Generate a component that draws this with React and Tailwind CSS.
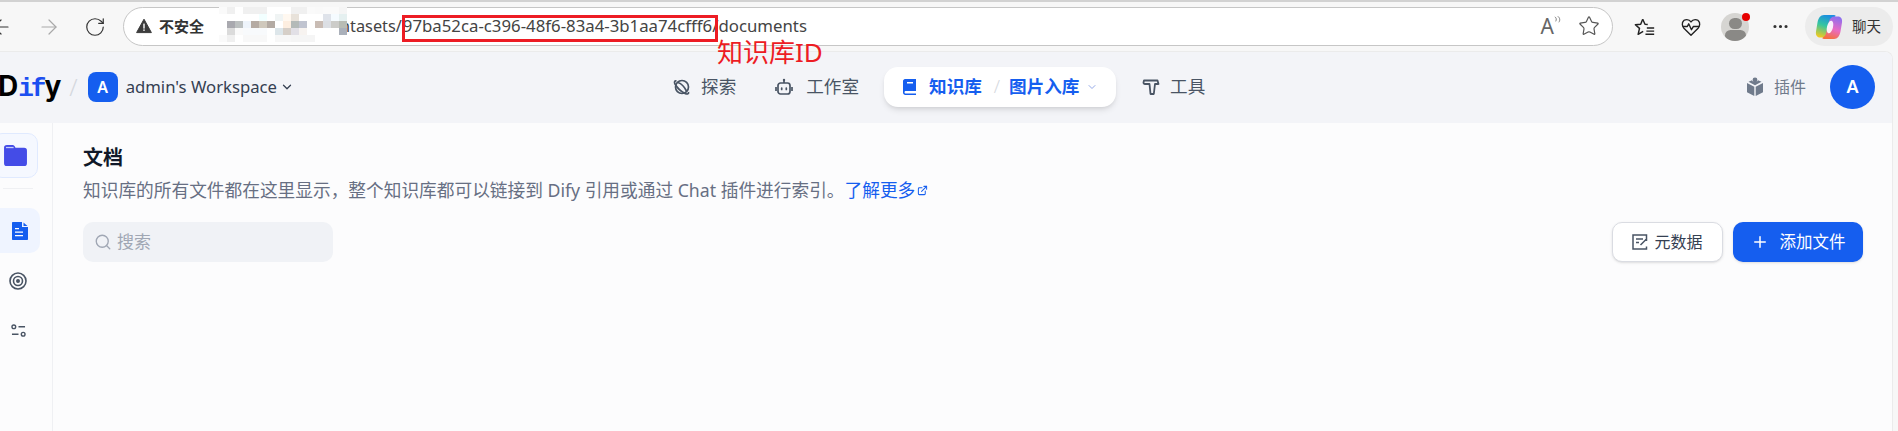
import { ArrowLeft, ArrowRight, RotateCw, Star, Ellipsis, ChevronDown, Plus, Search, ExternalLink } from "lucide-react";

const cjk = "font-['Noto_Sans','Noto_Sans_CJK_SC',sans-serif]";

// the blurred part of the address, 16 x 5 cells
const mosaic = [
  "bg-[#fafafa]", "bg-[#f0f0f0]", "bg-white", "bg-[#f0f0f0]", "bg-[#f0f0f0]", "bg-[#f0f0f0]", "bg-white", "bg-white", "bg-white", "bg-[#f0f0f0]", "bg-[#f0f0f0]", "bg-[#fafafa]", "bg-[#f9f9f9]", "bg-[#fafafa]", "bg-[#fafafa]", "bg-[#f5f5f5]",
  "bg-white", "bg-white", "bg-white", "bg-white", "bg-white", "bg-[#f2ffff]", "bg-white", "bg-[#f0f4f4]", "bg-[#fff8f0]", "bg-[#e8e2da]", "bg-white", "bg-white", "bg-white", "bg-[#dfe3ea]", "bg-[#f5fbff]", "bg-[#e5f0f0]",
  "bg-white", "bg-[#a9a9af]", "bg-[#bcc0c0]", "bg-[#eef4fb]", "bg-[#b5aba3]", "bg-[#cfc8bc]", "bg-[#b3aaa3]", "bg-white", "bg-[#fdeee0]", "bg-[#b4bab8]", "bg-[#c0c4d0]", "bg-white", "bg-[#c9bcb4]", "bg-[#dcdfe4]", "bg-[#ccccc9]", "bg-[#b8bcb4]",
  "bg-white", "bg-[#dbdbdb]", "bg-[#fafafa]", "bg-[#f8fafc]", "bg-[#f8fafc]", "bg-[#f8fafc]", "bg-white", "bg-[#dde6ea]", "bg-[#d6cfc8]", "bg-[#e2e0e6]", "bg-[#f7f3f0]", "bg-white", "bg-white", "bg-white", "bg-white", "bg-[#aab0ba]",
  "bg-[#fafafa]", "bg-[#f0f0f0]", "bg-white", "bg-[#f8f8f8]", "bg-[#f8f8f8]", "bg-[#f8f8f8]", "bg-white", "bg-[#f7f7f7]", "bg-[#f7f7f7]", "bg-[#f5f5f5]", "bg-[#f5f5f5]", "bg-[#f5f5f5]", "bg-white", "bg-white", "bg-white", "bg-white",
];

const BrowserBar = () => (
  <div className="h-[51px] shrink-0 flex items-center bg-[#f7f7f7] border-t-2 border-t-[#d2d2d2] text-[#333]">
    <ArrowLeft className="w-6 h-6 -ml-[11px] shrink-0" strokeWidth={1.2} />
    <ArrowRight className="w-6 h-6 ml-[24px] shrink-0 text-[#a9a9a9]" strokeWidth={1.2} />
    <RotateCw className="w-[22px] h-[22px] ml-[23px] shrink-0" strokeWidth={1.3} />
    <div className={`relative ml-[17px] w-[1490px] h-[39px] -mt-[1px] bg-white border border-[#c6c6c6] rounded-full flex items-center ${cjk}`}>
      <svg viewBox="0 0 16 16" className="w-[16px] h-[16px] ml-[12px] shrink-0">
        <path d="M8 1.2 15.4 14.6H.6Z" fill="#3c3c3c" stroke="#3c3c3c" strokeLinejoin="round" />
        <rect x="7.3" y="5.6" width="1.4" height="5" fill="#fff" />
        <rect x="7.3" y="11.4" width="1.4" height="1.5" fill="#fff" />
      </svg>
      <span className="ml-[7px] text-[15px] font-bold text-[#333] whitespace-nowrap">不安全</span>
      <span className="ml-[136px] text-[16.3px] text-[#444] whitespace-nowrap">ntasets/</span>
      <span className="ml-[1px] text-[16.8px] text-[#444] whitespace-nowrap">97ba52ca-c396-48f6-83a4-3b1aa74cfff6</span>
      <span className="text-[16.8px] text-[#444] whitespace-nowrap">/documents</span>
      <div className="absolute left-[95px] -top-[1px] w-[128px] h-[36px] grid grid-cols-16 grid-rows-5">
        {mosaic.map((c, i) => (
          <div key={i} className={c} />
        ))}
      </div>
      <div className="absolute left-[278px] top-[7px] w-[316px] h-[27px] border-[3px] border-[#ed1c24]" />
      <span className="absolute left-[593px] top-[27px] text-[26px] leading-[34px] text-[#ed1c24] whitespace-nowrap z-10">知识库ID</span>
      <span className="ml-auto text-[#666] text-[21px] leading-none mr-[24px] relative">
        A
        <svg viewBox="0 0 10 10" className="absolute top-0 -right-[8px] w-[9px] h-[9px]" fill="none" stroke="#777" strokeWidth="1">
          <path d="M2 1c2 1 2 3 1 5M5 0c3 2 3 5 1.500 7" />
        </svg>
      </span>
      <Star className="w-[22px] h-[22px] mr-[12px] text-[#555] shrink-0" strokeWidth={1.3} />
    </div>
    <svg viewBox="0 0 24 24" className="ml-[21px] w-[22px] h-[22px] shrink-0" fill="none" stroke="#222" strokeWidth="1.6" strokeLinejoin="round">
      <path d="M9.500 3.500 7.300 9 1.500 9.500 6 13.500 4.500 20l5.500-3.300" />
      <path d="M9.500 3.500 12 9l3 .2M14 13h8M13.500 16.500h8.500M12.500 20h9.500" />
    </svg>
    <svg viewBox="0 0 24 24" className="ml-[24px] w-[22px] h-[22px] shrink-0" fill="none" stroke="#222" strokeWidth="1.5" strokeLinejoin="round">
      <path d="M12 21 4 13C1 9.500 2.500 4 7.500 4c2 0 3.500 1 4.500 2.500C13 5 14.500 4 16.500 4c5 0 6.500 5.500 3.500 9Z" />
      <path d="M2.500 11.500H8l1.500-3 3 6.500 2-3.500h7" />
    </svg>
    <div className="ml-[19px] relative w-[28px] h-[28px] rounded-full bg-[#d6d5d2] overflow-hidden shrink-0 flex flex-col items-center">
      <div className="mt-[5px] w-[13px] h-[14px] rounded-full bg-[#8a8986]" />
      <div className="mt-[1px] w-[21px] h-[12px] rounded-full bg-[#8a8986]" />
    </div>
    <div className="w-[8px] h-[8px] -ml-[7px] -mt-[20px] rounded-full bg-[#e60000] z-10 shrink-0" />
    <Ellipsis className="ml-[21px] w-[19px] h-[19px] shrink-0" strokeWidth={2} />
    <div className={`ml-[15px] w-[88px] h-[39px] rounded-full bg-[#ececec] flex items-center shrink-0 ${cjk}`}>
      <svg viewBox="0 0 28 28" className="ml-[10px] w-[28px] h-[28px] shrink-0">
        <defs>
          <linearGradient id="cpA" x1="0.500" y1="0" x2="0.200" y2="1">
            <stop offset="0" stopColor="#1b8fe0" />
            <stop offset="0.450" stopColor="#35c6a0" />
            <stop offset="1" stopColor="#f7c91c" />
          </linearGradient>
          <linearGradient id="cpB" x1="0.700" y1="0" x2="0.400" y2="1">
            <stop offset="0" stopColor="#8b6ff0" />
            <stop offset="0.550" stopColor="#e86bc4" />
            <stop offset="1" stopColor="#f5703f" />
          </linearGradient>
        </defs>
        <path d="M9 2h10c1.500 0 2 .8 1.200 1.500-1.500.8-2.700 2-3.200 4l-3 12c-.8 3-2.500 5-5.500 5H5c-3 0-4.500-2.500-4-6l1.500-9C3.300 5 5.500 2 9 2Z" fill="url(#cpA)" />
        <path d="M19 26H9c-1.500 0-2-.8-1.200-1.500 1.500-.8 2.700-2 3.200-4l3-12c.8-3 2.500-5 5.500-5H23c3 0 4.500 2.500 4 6l-1.500 9C24.700 23 22.500 26 19 26Z" fill="url(#cpB)" />
        <ellipse cx="15" cy="14" rx="3" ry="6.500" transform="rotate(14 15 14)" fill="#fff" opacity="0.900" />
      </svg>
      <span className="ml-[9px] text-[14.5px] text-[#333] whitespace-nowrap">聊天</span>
    </div>
  </div>
);

const Logo = () => (
  <div className="-ml-[2px] flex items-baseline text-[28px] leading-none font-bold text-black font-['Inter',sans-serif]">
    <span>D</span>
    <span className="text-[#1c4ff0] text-[26px] tracking-[-3px] font-['Liberation_Mono',monospace]">if</span>
    <span className="ml-[1px]">y</span>
  </div>
);

const Header = () => (
  <div className={`h-[71px] shrink-0 pb-[2px] bg-[#f3f4f8] flex items-center ${cjk}`}>
    <Logo />
    <span className="ml-[8px] text-[24px] font-light text-[#d5d8de] leading-none">/</span>
    <div className="ml-[10px] w-[30px] h-[30px] rounded-[8px] bg-[#155eef] text-white text-[16px] font-semibold flex items-center justify-center">A</div>
    <span className="ml-[8px] text-[16.7px] text-[#354052] whitespace-nowrap">admin's Workspace</span>
    <ChevronDown className="ml-[3px] w-[14px] h-[14px] text-[#354052]" strokeWidth={2.2} />

    <svg viewBox="0 0 18 18" className="ml-[379px] w-[18px] h-[18px]" fill="none" stroke="#495464" strokeWidth="1.700">
      <circle cx="9" cy="9" r="6.500" />
      <path d="M3.500 3c-2-.5-2.500 1-1.500 3 2 3.500 6 7.500 10 9.500 2 .8 4 .8 3.500-1.500" />
      <path d="M5 4.500c3 1 6.500 4.500 8.500 8.500" />
    </svg>
    <span className="ml-[10px] text-[17.6px] text-[#495464] whitespace-nowrap">探索</span>

    <svg viewBox="0 0 18 18" className="ml-[39px] w-[18px] h-[18px]" fill="none" stroke="#495464" strokeWidth="1.700">
      <rect x="3" y="5" width="12" height="11" rx="2.500" />
      <circle cx="9" cy="2" r="1.200" fill="#495464" stroke="none" />
      <path d="M9 2.500V5M1 9v4M17 9v4" />
      <path d="M6.700 10v1.500M11.300 10v1.500" strokeLinecap="round" />
    </svg>
    <span className="ml-[13px] text-[17.6px] text-[#495464] whitespace-nowrap">工作室</span>

    <div className="ml-[25px] h-[40px] w-[232px] rounded-[14px] bg-white shadow-md flex items-center text-[#155eef] shrink-0">
      <svg viewBox="0 0 18 18" className="ml-[17px] w-[18px] h-[18px]" fill="#155eef">
        <path d="M4 1h11v12H5c-1 0-1.500.5-1.500 1.200S4 15.500 5 15.500h10V17H4.500C3 17 2 16 2 14.500V3c0-1 1-2 2-2Z" />
        <rect x="6" y="4" width="6" height="1.500" fill="#fff" />
      </svg>
      <span className="ml-[10px] text-[17.6px] font-bold whitespace-nowrap">知识库</span>
      <span className="ml-[12px] text-[18px] text-[#d5d8de] font-light">/</span>
      <span className="ml-[9px] text-[17.6px] font-bold whitespace-nowrap">图片入库</span>
      <ChevronDown className="ml-[7px] w-[12px] h-[12px] text-[#94a9e8]" strokeWidth={2} />
    </div>

    <svg viewBox="0 0 18 18" className="ml-[26px] w-[18px] h-[18px]" fill="none" stroke="#495464" strokeWidth="1.800" strokeLinejoin="round">
      <path d="M2 2.500h13.500l1 3.500H13l-1.200 10H8.500L7.500 6H3c-1 0-1.500-.5-1.500-1.500Z" />
    </svg>
    <span className="ml-[10px] text-[17.6px] text-[#495464] whitespace-nowrap">工具</span>

    <svg viewBox="0 0 20 20" className="ml-auto w-[20px] h-[20px]" fill="#6f7a8b">
      <circle cx="10" cy="3" r="2.400" />
      <path d="M2 6l7.300 3.700V19L2 15.200ZM18 6l-7.300 3.700V19l7.300-3.800ZM3.500 4.800 10 8.300l6.500-3.500-3.500-1.600c-.5 2-5.500 2-6 0Z" />
    </svg>
    <span className="ml-[9px] text-[16px] text-[#6f7a8b] whitespace-nowrap">插件</span>
    <div className="ml-[24px] mr-[17px] w-[45px] h-[44px] rounded-full bg-[#155eef] text-white text-[18px] font-semibold flex items-center justify-center">A</div>
  </div>
);

const Sidebar = () => (
  <div className="w-[53px] shrink-0 border-r border-r-[#eff0f3] flex flex-col">
    <div className="mt-[10px] -ml-[8px] w-[46px] h-[45px] rounded-[10px] bg-[#f5f8ff] border border-[#e0eaff] flex items-center justify-end pr-[10px]">
      <svg viewBox="0 0 24 22" className="w-[23px] h-[21px]">
        <path d="M3 0h6c1.500 0 2 1 3 3h9c2 0 3 1 3 3v13c0 2-1 3-3 3H3c-2 0-3-1-3-3V3c0-2 1-3 3-3Z" fill="#444ce7" />
        <rect x="2" y="2" width="8" height="1.300" fill="#c7d0fb" />
      </svg>
    </div>
    <div className="mt-[10px] ml-[3px] w-[30px] h-px bg-[#eff0f3]" />
    <div className="mt-[19px] w-[40px] h-[45px] rounded-r-[10px] rounded-l-none bg-[#eff4ff] flex items-center justify-center">
      <svg viewBox="0 0 16 18" className="w-[16px] h-[18px]">
        <path d="M1 0h9v5h6v12c0 .6-.4 1-1 1H1c-.6 0-1-.4-1-1V1c0-.6.4-1 1-1Z" fill="#155eef" />
        <path d="M11.500.5 15.500 4h-4Z" fill="#155eef" />
        <path d="M3 6h4v1.300H3ZM3 9.500h8v1.300H3ZM3 13h8v1.300H3Z" fill="#fff" />
      </svg>
    </div>
    <svg viewBox="0 0 18 18" className="mt-[19px] ml-[9px] w-[18px] h-[18px]" fill="none" stroke="#495464" strokeWidth="1.600">
      <circle cx="9" cy="9" r="8" />
      <circle cx="9" cy="9" r="4.500" />
      <circle cx="9" cy="9" r="1.200" fill="#495464" />
    </svg>
    <svg viewBox="0 0 16 15" className="mt-[34px] ml-[11px] w-[15px] h-[14px]" fill="none" stroke="#495464" strokeWidth="1.500">
      <circle cx="3" cy="3" r="2" />
      <path d="M8 3h7M1 11h7" />
      <circle cx="13" cy="11" r="2" />
    </svg>
  </div>
);

const Content = () => (
  <div className={`flex-1 min-w-0 pl-[30px] pr-[29px] pt-[23px] ${cjk}`}>
    <div className="text-[20px] leading-[24px] font-bold text-[#101828]">文档</div>
    <div className="mt-[8px] text-[17.7px] leading-[24px] text-[#676f83] flex items-center whitespace-nowrap">
      知识库的所有文件都在这里显示，整个知识库都可以链接到 Dify 引用或通过 Chat 插件进行索引。
      <span className="text-[#155eef]">了解更多</span>
      <ExternalLink className="ml-[2px] w-[11px] h-[11px] text-[#155eef]" strokeWidth={2.2} />
    </div>
    <div className="mt-[20px] flex justify-between">
      <div className="w-[250px] h-[40px] rounded-[10px] bg-[#f0f2f6] flex items-center">
        <Search className="ml-[11px] w-[18px] h-[18px] text-[#a0a7b4]" strokeWidth={1.800} />
        <span className="ml-[5px] text-[17px] text-[#a0a7b4]">搜索</span>
      </div>
      <div className="flex gap-[10px]">
        <div className="w-[111px] h-[40px] rounded-[10px] bg-white border border-[#dadce2] shadow-sm flex items-center justify-center text-[#354052]">
          <svg viewBox="0 0 16 16" className="w-[16px] h-[16px]" fill="none" stroke="#495464" strokeWidth="1.500">
            <path d="M14.500 7V1H1v14h13.500v-2.500M4 5h7M4 8.500h3M8.500 11l5.500-5.500" />
          </svg>
          <span className="ml-[6px] text-[16px] whitespace-nowrap">元数据</span>
        </div>
        <div className="w-[130px] h-[40px] rounded-[10px] bg-[#155eef] shadow-sm text-white flex items-center justify-center">
          <Plus className="w-[18px] h-[18px]" strokeWidth={2} />
          <span className="ml-[11px] text-[16.5px] whitespace-nowrap">添加文件</span>
        </div>
      </div>
    </div>
  </div>
);

export default function App() {
  return (
    <div className="w-[1898px] h-[431px] overflow-hidden flex flex-col bg-[#f7f7f7]">
      <BrowserBar />
      <div className="flex-1 min-h-0 w-[1893px] flex flex-col bg-[#fcfcfd] rounded-tr-[8px] overflow-hidden border-t border-t-[#ebebeb] border-r border-r-[#ebebeb]">
        <Header />
        <div className="flex-1 min-h-0 flex">
          <Sidebar />
          <Content />
        </div>
      </div>
    </div>
  );
}
